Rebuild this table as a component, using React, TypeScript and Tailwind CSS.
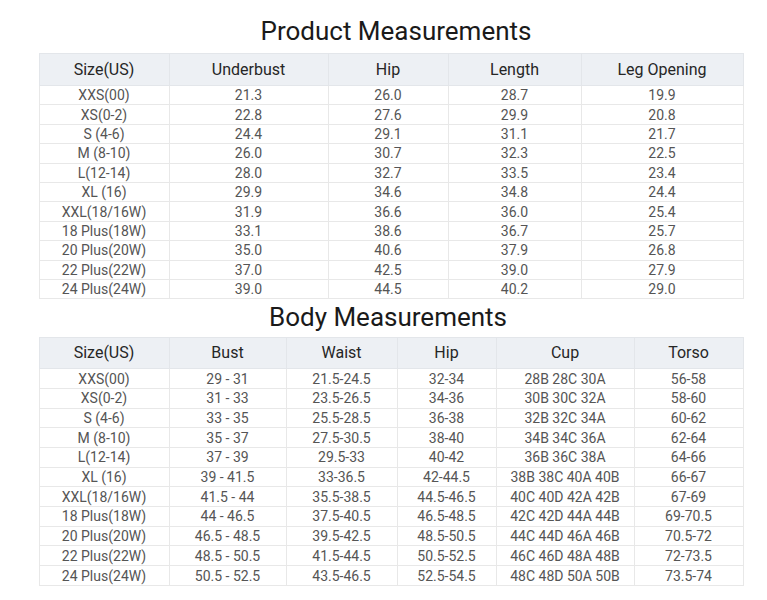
const productCols = [
  { label: 'Size(US)', w: 'w-[130px]' },
  { label: 'Underbust', w: 'w-[159px]' },
  { label: 'Hip', w: 'w-[120px]' },
  { label: 'Length', w: 'w-[133px]' },
  { label: 'Leg Opening', w: 'w-[162px]' },
];

const productRows = [
  ['XXS(00)', '21.3', '26.0', '28.7', '19.9'],
  ['XS(0-2)', '22.8', '27.6', '29.9', '20.8'],
  ['S (4-6)', '24.4', '29.1', '31.1', '21.7'],
  ['M (8-10)', '26.0', '30.7', '32.3', '22.5'],
  ['L(12-14)', '28.0', '32.7', '33.5', '23.4'],
  ['XL (16)', '29.9', '34.6', '34.8', '24.4'],
  ['XXL(18/16W)', '31.9', '36.6', '36.0', '25.4'],
  ['18 Plus(18W)', '33.1', '38.6', '36.7', '25.7'],
  ['20 Plus(20W)', '35.0', '40.6', '37.9', '26.8'],
  ['22 Plus(22W)', '37.0', '42.5', '39.0', '27.9'],
  ['24 Plus(24W)', '39.0', '44.5', '40.2', '29.0'],
];

const bodyCols = [
  { label: 'Size(US)', w: 'w-[130px]' },
  { label: 'Bust', w: 'w-[117px]' },
  { label: 'Waist', w: 'w-[111px]' },
  { label: 'Hip', w: 'w-[99px]' },
  { label: 'Cup', w: 'w-[138px]' },
  { label: 'Torso', w: 'w-[109px]' },
];

const bodyRows = [
  ['XXS(00)', '29 - 31', '21.5-24.5', '32-34', '28B 28C 30A', '56-58'],
  ['XS(0-2)', '31 - 33', '23.5-26.5', '34-36', '30B 30C 32A', '58-60'],
  ['S (4-6)', '33 - 35', '25.5-28.5', '36-38', '32B 32C 34A', '60-62'],
  ['M (8-10)', '35 - 37', '27.5-30.5', '38-40', '34B 34C 36A', '62-64'],
  ['L(12-14)', '37 - 39', '29.5-33', '40-42', '36B 36C 38A', '64-66'],
  ['XL (16)', '39 - 41.5', '33-36.5', '42-44.5', '38B 38C 40A 40B', '66-67'],
  ['XXL(18/16W)', '41.5 - 44', '35.5-38.5', '44.5-46.5', '40C 40D 42A 42B', '67-69'],
  ['18 Plus(18W)', '44 - 46.5', '37.5-40.5', '46.5-48.5', '42C 42D 44A 44B', '69-70.5'],
  ['20 Plus(20W)', '46.5 - 48.5', '39.5-42.5', '48.5-50.5', '44C 44D 46A 46B', '70.5-72'],
  ['22 Plus(22W)', '48.5 - 50.5', '41.5-44.5', '50.5-52.5', '46C 46D 48A 48B', '72-73.5'],
  ['24 Plus(24W)', '50.5 - 52.5', '43.5-46.5', '52.5-54.5', '48C 48D 50A 50B', '73.5-74'],
];

interface SizeTableProps {
  cols: { label: string; w: string }[];
  rows: string[][];
  headH: string;
  rowH: string;
}

const SizeTable = ({ cols, rows, headH, rowH }: SizeTableProps) => (
  <table className="w-[704px] table-fixed border-collapse">
    <thead>
      <tr className={`${headH} bg-[#edf0f4]`}>
        {cols.map((c) => (
          <th
            key={c.label}
            className={`${c.w} border border-[#e3e6ea] p-0 text-center text-[16px] font-normal text-[#262626]`}
          >
            {c.label}
          </th>
        ))}
      </tr>
    </thead>
    <tbody>
      {rows.map((row) => (
        <tr key={row[0]} className={rowH}>
          {row.map((cell, i) => (
            <td
              key={i}
              className="border border-[#e8e8e8] p-0 text-center text-[14px] leading-none text-[#555555]"
            >
              {cell}
            </td>
          ))}
        </tr>
      ))}
    </tbody>
  </table>
);

export default function App() {
  return (
    <div
      className="h-[600px] w-[767px] bg-white pt-[18px] pl-[39px]"
      style={{ fontFamily: 'Roboto, "Noto Sans", sans-serif' }}
    >
      <div className="flex w-[704px] flex-col items-center">
        <h1 className="mb-[8px] pl-[10px] text-[26px] leading-[27px] font-normal text-[#1a1a1a]">
          Product Measurements
        </h1>
        <SizeTable cols={productCols} rows={productRows} headH="h-[32px]" rowH="h-[19.4px]" />
        <h2 className="mt-[5px] mb-[6px] pr-[6px] text-[26px] leading-[27px] font-normal text-[#1a1a1a]">
          Body Measurements
        </h2>
        <SizeTable cols={bodyCols} rows={bodyRows} headH="h-[31px]" rowH="h-[19.7px]" />
      </div>
    </div>
  );
}
